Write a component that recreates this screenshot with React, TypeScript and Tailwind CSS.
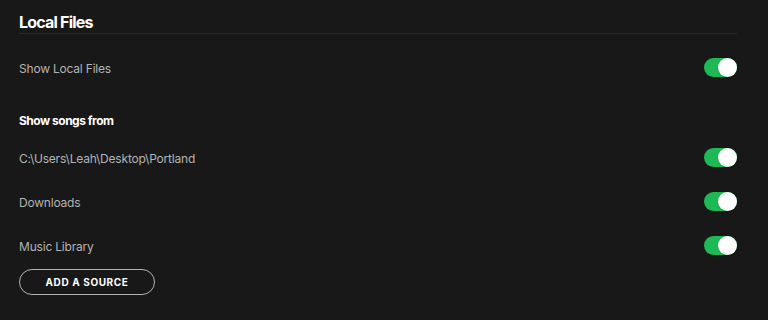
const sources = ['C:\\Users\\Leah\\Desktop\\Portland', 'Downloads', 'Music Library']

function Toggle() {
  return (
    <span className="relative inline-flex h-[19px] w-[33px] shrink-0 items-center rounded-full bg-[#1db954]">
      <span className="absolute right-0 h-[19px] w-[19px] rounded-full bg-white shadow" />
    </span>
  )
}

function Row({ label }: { label: string }) {
  return (
    <div className="flex h-[44px] items-center justify-between">
      <span className="pt-[4px] text-[12px] tracking-[-0.2px] text-[#b3b3b3]">{label}</span>
      <Toggle />
    </div>
  )
}

export default function App() {
  return (
    <div className="h-[320px] w-[768px] overflow-hidden bg-[#181818] pl-[19px] pr-[31px] font-['Inter',sans-serif]">
      <div className="border-b border-[#282828] pt-[11px] pb-0">
        <h2 className="text-[16px] leading-[22px] font-bold tracking-[-0.8px] text-white">Local Files</h2>
      </div>

      <div className="mt-[13px] flex h-[40px] items-center justify-between">
        <span className="pt-[4px] text-[12px] tracking-[-0.2px] text-[#b3b3b3]">Show Local Files</span>
        <Toggle />
      </div>

      <div className="mt-[23px] flex h-[20px] items-center pt-[2px] text-[12px] font-bold tracking-[-0.5px] text-white">
        Show songs from
      </div>

      <div className="mt-[5px]">
        {sources.map((s) => (
          <Row key={s} label={s} />
        ))}
      </div>

      <button className="mt-[2px] flex h-[26px] w-[136px] items-center justify-center rounded-full border border-[#b3b3b3] text-[10px] font-bold tracking-[0.6px] text-white">
        ADD A SOURCE
      </button>
    </div>
  )
}
